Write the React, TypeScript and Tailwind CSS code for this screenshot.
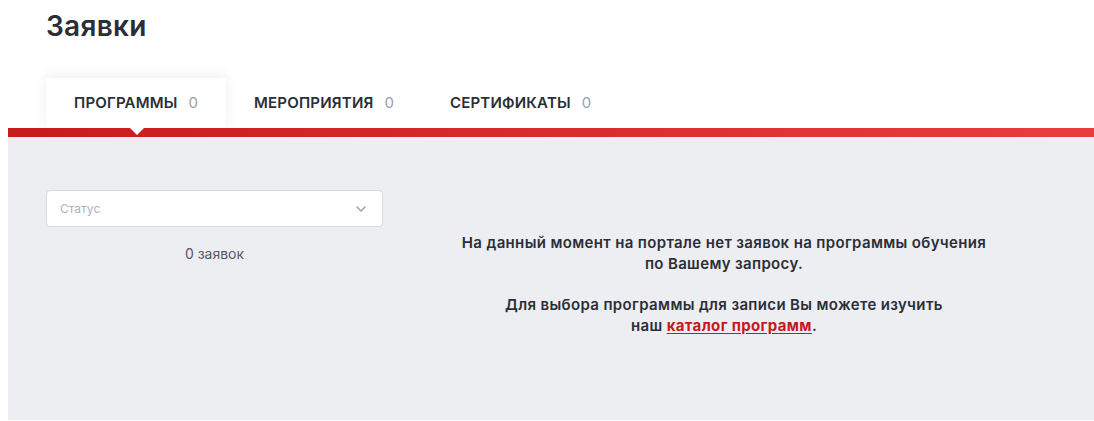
import React, { useState } from 'react';
import { ChevronDown } from 'lucide-react';

const tabs = [
  { key: 'programs', label: 'Программы', count: 0 },
  { key: 'events', label: 'Мероприятия', count: 0 },
  { key: 'certs', label: 'Сертификаты', count: 0 },
];

export default function App() {
  const [active, setActive] = useState('programs');

  return (
    <div className="min-h-screen bg-white font-['Inter','Noto_Sans',sans-serif] text-[#2b2e37]">
      <h1 className="pl-[46px] pt-[9px] text-[28px] font-semibold leading-[34px] tracking-[0.3px]">Заявки</h1>

      {/* Tabs */}
      <div className="mt-[35px] flex pl-[46px]">
        {tabs.map((tab) => {
          const isActive = tab.key === active;
          return (
            <button
              key={tab.key}
              onClick={() => setActive(tab.key)}
              className={
                isActive
                  ? 'relative flex h-[50px] items-center bg-white px-[28px] shadow-[0_-2px_14px_rgba(0,0,0,0.07)]'
                  : 'relative flex h-[50px] items-center px-[28px]'
              }
            >
              <span className="text-[15px] font-semibold uppercase tracking-[0.2px]">{tab.label}</span>
              <span className="ml-[11px] text-[15px] text-[#9aa0a8]">{tab.count}</span>
            </button>
          );
        })}
      </div>

      {/* Red stripe with notch under active tab */}
      <div className="relative ml-[8px] h-[9px] bg-gradient-to-r from-[#c71a1d] to-[#e93c3e]">
        <div className="absolute left-[122px] top-0 h-0 w-0 border-x-[7px] border-t-[7px] border-x-transparent border-t-white" />
      </div>

      {/* Content panel */}
      <div className="ml-[8px] flex h-[283px] bg-[#edeef2] pl-[38px] pr-[29px] pt-[53px]">
        <div className="w-[337px] shrink-0">
          <div className="flex h-[37px] items-center justify-between rounded-[4px] border border-[#d8dadf] bg-white pl-[13px] pr-[13px]">
            <span className="text-[12px] text-[#aeb2b9]">Статус</span>
            <ChevronDown size={16} strokeWidth={2} className="text-[#9a9ea6]" />
          </div>
          <p className="mt-[16px] text-center text-[14px] text-[#555861]">0 заявок</p>
        </div>

        <div className="flex-1 pt-[42px] text-center text-[15px] font-semibold leading-[21px] tracking-[0.35px]">
          <p>
            На данный момент на портале нет заявок на программы обучения
            <br />
            по Вашему запросу.
          </p>
          <p className="mt-[20px]">
            Для выбора программы для записи Вы можете изучить
            <br />
            наш{' '}
            <a href="#" className="font-bold text-[#c8181d] underline underline-offset-2">
              каталог программ
            </a>
            .
          </p>
        </div>
      </div>
    </div>
  );
}
